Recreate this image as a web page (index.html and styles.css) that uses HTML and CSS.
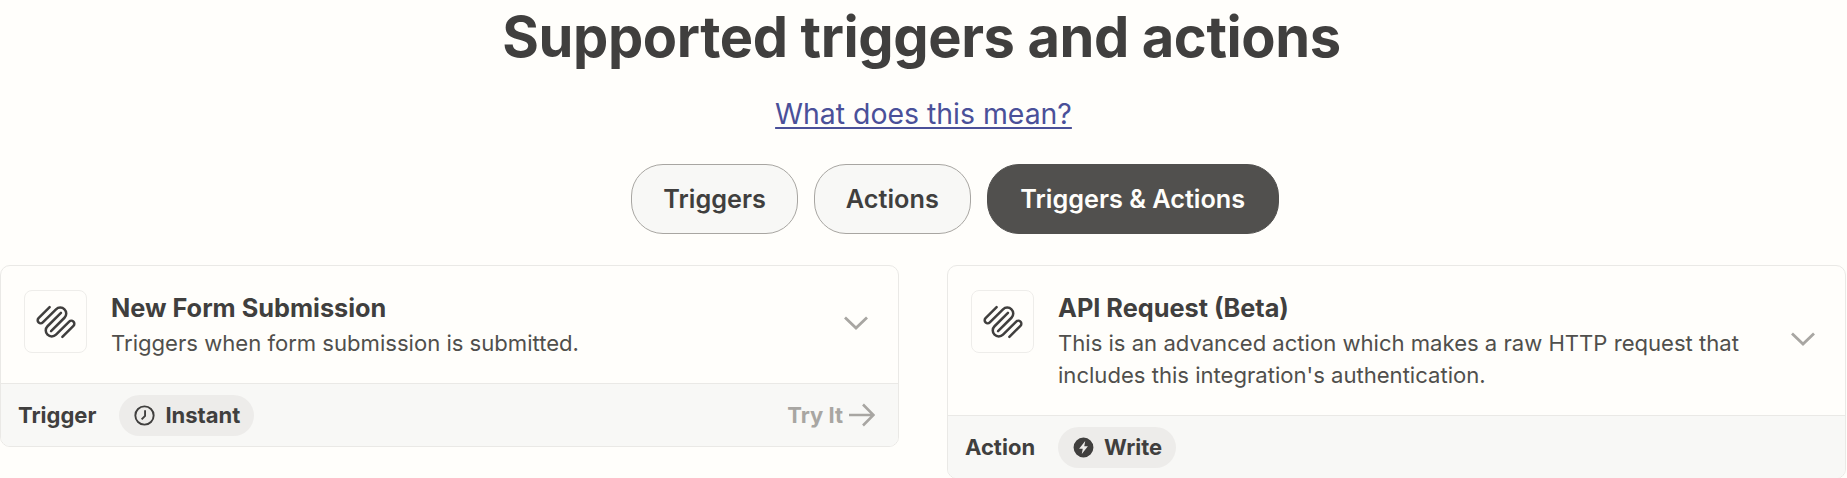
FILE: index.html
```html
<!DOCTYPE html>
<html lang="en">
<head>
<meta charset="utf-8">
<title>Supported triggers and actions</title>
<link rel="stylesheet" href="styles.css">
</head>
<body>
<main class="page">
  <h1 class="title">Supported triggers and actions</h1>
  <a class="help" href="#">What does this mean?</a>
  <div class="tabs">
    <button class="tab">Triggers</button>
    <button class="tab">Actions</button>
    <button class="tab tab-active">Triggers &amp; Actions</button>
  </div>
  <div class="cards">
    <article class="card">
      <div class="card-head">
        <div class="logo-box">
          <svg class="logo" viewBox="-66 -57 132 114" fill="none" stroke="currentColor" stroke-width="7.5" stroke-linecap="round"><g transform="rotate(-45)"><path d="M18 -45H-29A9 9 0 0 0 -29 -27H27A18 18 0 0 1 27 9H-30"/><path d="M-18 45H29A9 9 0 0 0 29 27H-27A18 18 0 0 1 -27 -9H30"/></g></svg>
        </div>
        <div class="card-text">
          <h2 class="card-title">New Form Submission</h2>
          <p class="card-desc">Triggers when form submission is submitted.</p>
        </div>
        <svg class="chevron" viewBox="0 0 24 14" fill="none" stroke="currentColor" stroke-width="2.8"><path d="M1 1.5L12 12L23 1.5"/></svg>
      </div>
      <div class="card-foot">
        <span class="kind">Trigger</span>
        <span class="pill">
          <svg class="pill-icon" viewBox="0 0 22 22" fill="none" stroke="currentColor" stroke-width="2"><circle cx="11" cy="11" r="9.6"/><path d="M11.6 5.5V11.4L8 15"/></svg>
          Instant
        </span>
        <a class="try" href="#">Try It
          <svg class="arrow" viewBox="0 0 26 24" fill="none" stroke="currentColor" stroke-width="2.6"><path d="M0 12H24M14 1.5L24.5 12L14 22.5"/></svg>
        </a>
      </div>
    </article>
    <article class="card">
      <div class="card-head">
        <div class="logo-box">
          <svg class="logo" viewBox="-66 -57 132 114" fill="none" stroke="currentColor" stroke-width="7.5" stroke-linecap="round"><g transform="rotate(-45)"><path d="M18 -45H-29A9 9 0 0 0 -29 -27H27A18 18 0 0 1 27 9H-30"/><path d="M-18 45H29A9 9 0 0 0 29 27H-27A18 18 0 0 1 -27 -9H30"/></g></svg>
        </div>
        <div class="card-text">
          <h2 class="card-title">API Request (Beta)</h2>
          <p class="card-desc">This is an advanced action which makes a raw HTTP request that includes this integration's authentication.</p>
        </div>
        <svg class="chevron" viewBox="0 0 24 14" fill="none" stroke="currentColor" stroke-width="2.8"><path d="M1 1.5L12 12L23 1.5"/></svg>
      </div>
      <div class="card-foot">
        <span class="kind">Action</span>
        <span class="pill">
          <svg class="pill-icon" viewBox="0 0 22 22"><path fill="currentColor" fill-rule="evenodd" d="M11 0.6a10.4 10.4 0 1 0 0 20.8a10.4 10.4 0 0 0 0-20.8zM12.8 4.2L6.4 12.4H10.2L9.2 17.8L15.6 9.6H11.8z"/></svg>
          Write
        </span>
      </div>
    </article>
  </div>
</main>
</body>
</html>
```

FILE: styles.css
```css
* {
  box-sizing: border-box;
}

html,
body {
  margin: 0;
  height: 478px;
  overflow: hidden;
  background: #fffefb;
}

body {
  font-family: Inter, "Liberation Sans", sans-serif;
  color: #403f3e;
}

.page {
  display: flex;
  flex-direction: column;
  align-items: center;
  padding-top: 3px;
}

.title {
  margin: 0 4px 0 0;
  font-size: 56px;
  line-height: 68px;
  font-weight: 700;
  letter-spacing: -0.4px;
}

.help {
  margin-top: 25px;
  font-size: 28.4px;
  line-height: 36px;
  color: #4a5099;
  text-underline-offset: 3px;
}

.tabs {
  display: flex;
  gap: 16px;
  margin-top: 32px;
  margin-left: 63px;
}

.tab {
  height: 70px;
  padding: 0 31px;
  border: 1px solid #a8a6a2;
  border-radius: 32px;
  background: #f8f8f6;
  color: #403f3e;
  font: 600 25.25px Inter, "Liberation Sans", sans-serif;
}

.tab-active {
  padding: 0 32.5px;
  border-color: #51504e;
  background: #51504e;
  color: #fffefb;
}

.cards {
  align-self: stretch;
  display: grid;
  grid-template-columns: 899px 899px;
  column-gap: 48px;
  align-items: start;
  margin-top: 31px;
}

.card {
  border: 1px solid #eae9e6;
  border-radius: 10px;
  overflow: hidden;
}

.card-head {
  display: flex;
  align-items: flex-start;
  padding: 24px 23px;
}

.logo-box {
  flex: none;
  display: flex;
  align-items: center;
  justify-content: center;
  width: 63px;
  height: 63px;
  border: 1px solid #eeedea;
  border-radius: 8px;
}

.logo {
  width: 44px;
  height: 38px;
}

.card-text {
  flex: 1;
  margin-left: 24px;
  max-width: 700px;
}

.card-title {
  margin: 0 0 2px;
  font-size: 25.3px;
  line-height: 35px;
  font-weight: 700;
}

.card-desc {
  margin: 0;
  font-size: 22.08px;
  line-height: 32px;
  color: #504f4c;
}

.chevron {
  flex: none;
  align-self: center;
  width: 24px;
  height: 14px;
  margin-left: auto;
  margin-right: 7px;
  margin-bottom: 4px;
  color: #a8a6a2;
}

.card-foot {
  display: flex;
  align-items: center;
  height: 63px;
  padding: 0 23px 0 17px;
  border-top: 1px solid #eae9e6;
  background: #f8f8f6;
}

.kind {
  font-size: 22px;
  font-weight: 700;
}

.pill {
  display: flex;
  align-items: center;
  gap: 10px;
  height: 41px;
  margin-left: 23px;
  padding: 0 14px 0 15px;
  border-radius: 21px;
  background: #edecea;
  font-size: 22px;
  font-weight: 700;
}

.pill-icon {
  width: 21px;
  height: 21px;
}

.try {
  display: flex;
  align-items: center;
  gap: 6px;
  margin-left: auto;
  color: #a8a6a2;
  font-size: 22px;
  font-weight: 700;
  text-decoration: none;
}

.arrow {
  width: 26px;
  height: 24px;
}
```
